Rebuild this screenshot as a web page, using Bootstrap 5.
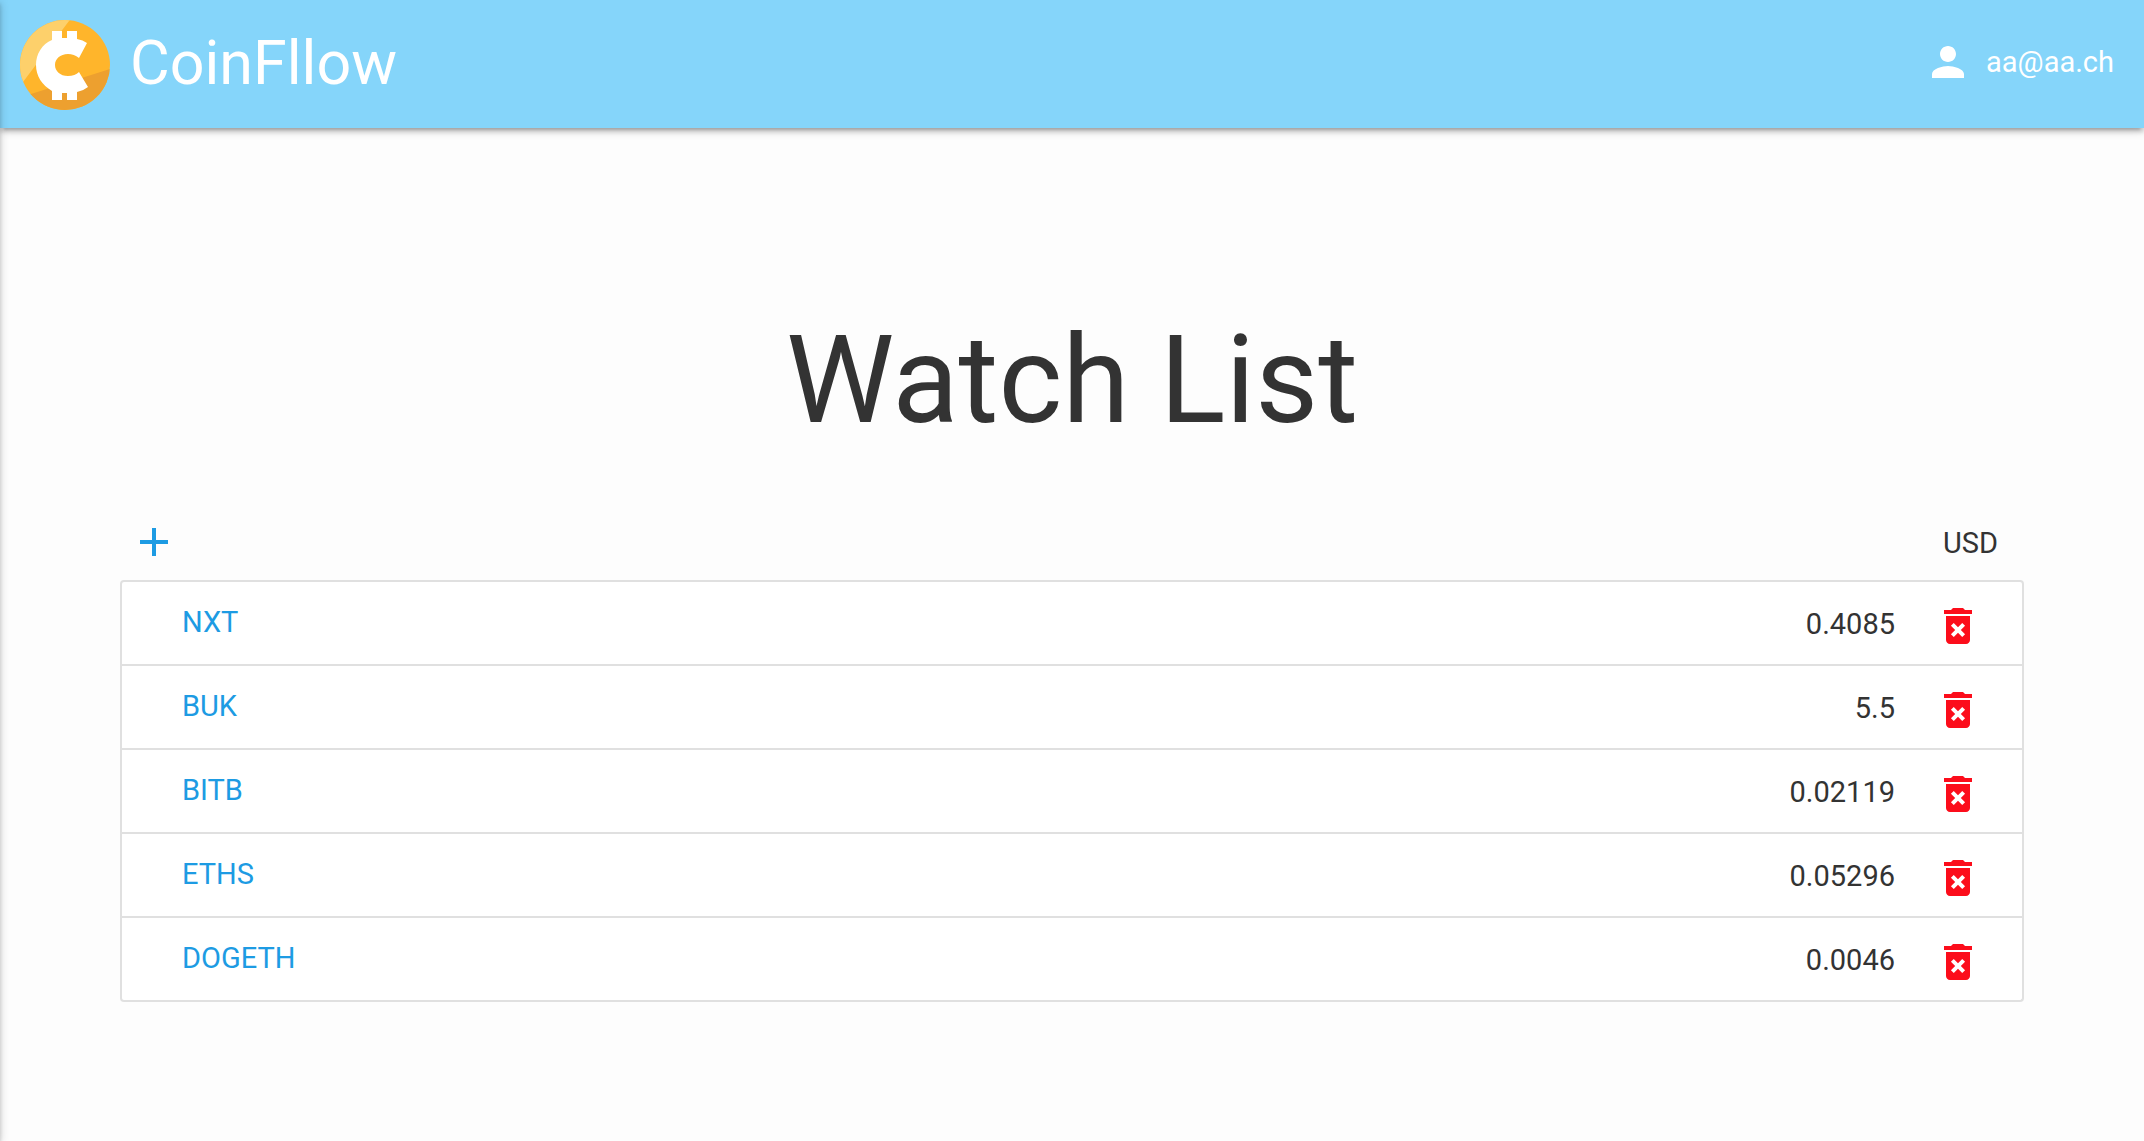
<!DOCTYPE html>
<html lang="en">
<head>
<meta charset="utf-8">
<meta name="viewport" content="width=device-width, initial-scale=1">
<title>CoinFllow</title>
<link href="https://cdn.jsdelivr.net/npm/bootstrap@5.3.0/dist/css/bootstrap.min.css" rel="stylesheet">
<style>
  body { font-family: Roboto, sans-serif; font-size: 29px; line-height: 44px; color: #333; background: #fdfdfd; }
  /* edge shadow of the closed side drawer */
  body::before { content: ""; position: fixed; z-index: 10; top: 0; bottom: 0; left: -20px; width: 20px;
    box-shadow: 0 4px 4px rgba(0,0,0,.14), 0 2px 10px rgba(0,0,0,.2); }
  .topbar { height: 128px; padding: 0 30px 4px 20px; background: #85d5fa;
    box-shadow: 0 4px 4px rgba(0,0,0,.14), 0 6px 2px -4px rgba(0,0,0,.12), 0 2px 10px rgba(0,0,0,.2); }
  .brand-link { gap: 20px; padding-top: 2px; font-size: 61px; line-height: 72px; }
  .brand-link svg { width: 90px; height: 90px; margin-top: 4px; }
  .user-link { gap: 14px; }
  .icon { width: 48px; height: 48px; display: block; fill: currentColor; }
  .watch { padding: 186px 120px 60px; }
  .title-text { font-size: 122px; line-height: 134px; margin-bottom: 70px; font-weight: 400; }
  .tools { padding: 0 26px 14px 10px; }
  .currency { padding-top: 2px; }
  .btn-icon { color: #1d9be3; }
  .btn-remove { color: #fc0d1b; padding-top: 6px; }
  .btn-remove:hover { color: #c90a15; }
  .coins { --bs-list-group-border-width: 2px; --bs-list-group-border-color: #e0e0e0; --bs-list-group-border-radius: 4px; --bs-list-group-bg: #fff; --bs-list-group-color: #333; }
  .coin { height: 84px; padding: 0 40px 0 60px; }
  .coin:first-child { height: 86px; }
  .coin-name { color: #1d9be3; padding-bottom: 2px; }
  .price { padding-right: 39px; padding-top: 2px; }
</style>
</head>
<body>
<header>
  <nav class="topbar d-flex align-items-center justify-content-between" aria-label="Main">
    <a href="#" class="brand-link d-flex align-items-center text-white text-decoration-none">
      <svg viewBox="0 0 90 90" aria-hidden="true">
        <defs><clipPath id="coin"><circle cx="45" cy="45" r="45"/></clipPath></defs>
        <g clip-path="url(#coin)">
          <rect width="90" height="90" fill="#ffb52b"/>
          <path d="M0 0H50L49 1L3 62H0Z" fill="#fdd06b"/>
          <path d="M90 49L11 74L0 77V90H90Z" fill="#eda02f"/>
        </g>
        <path fill="#fff" d="M32 11h10v7h5v-7h10v8q6 1 10 4l-8 15q-5-4-11-4c-8 0-13 5-13 11s5 11 13 11q7 0 11-4l9 15q-5 4-11 5v8H47v-7h-5v7H32v-9C22 65 16 56 16 45S22 24 32 20Z"/>
      </svg>
      <span>CoinFllow</span>
    </a>
    <a href="#" class="user-link d-flex align-items-center text-white text-decoration-none">
      <svg class="icon" viewBox="0 0 24 24" aria-hidden="true"><path d="M12 12c2.21 0 4-1.79 4-4s-1.79-4-4-4-4 1.790-4 4 1.790 4 4 4zm0 2c-2.670 0-8 1.340-8 4v2h16v-2c0-2.660-5.330-4-8-4z"/></svg>
      <span>aa@aa.ch</span>
    </a>
  </nav>
</header>

<svg class="d-none" aria-hidden="true">
  <symbol id="trash" viewBox="0 0 24 24"><path fill-rule="evenodd" d="M6 19c0 1.100.900 2 2 2h8c1.100 0 2-.900 2-2V7H6v12zm2.460-7.120 1.410-1.410L12 12.590l2.120-2.120 1.410 1.410L13.410 14l2.120 2.120-1.410 1.410L12 15.410l-2.120 2.120-1.410-1.410L10.590 14l-2.130-2.120zM15.500 4l-1-1h-5l-1 1H5v2h14V4z"/></symbol>
</svg>

<main class="watch">
  <h1 class="title-text text-center">Watch List</h1>
  <div class="tools d-flex align-items-center justify-content-between">
    <button type="button" class="btn btn-icon p-0 border-0" aria-label="Add coin">
      <svg class="icon" viewBox="0 0 24 24"><path d="M19 13h-6v6h-2v-6H5v-2h6V5h2v6h6v2z"/></svg>
    </button>
    <span class="currency">USD</span>
  </div>
  <ul class="list-group coins">
    <li class="list-group-item coin d-flex align-items-center">
      <a href="#" class="coin-name text-decoration-none me-auto">NXT</a><span class="price">0.4085</span>
      <button type="button" class="btn btn-remove border-0 px-0 pb-0" aria-label="Remove NXT"><svg class="icon"><use href="#trash"/></svg></button>
    </li>
    <li class="list-group-item coin d-flex align-items-center">
      <a href="#" class="coin-name text-decoration-none me-auto">BUK</a><span class="price">5.5</span>
      <button type="button" class="btn btn-remove border-0 px-0 pb-0" aria-label="Remove BUK"><svg class="icon"><use href="#trash"/></svg></button>
    </li>
    <li class="list-group-item coin d-flex align-items-center">
      <a href="#" class="coin-name text-decoration-none me-auto">BITB</a><span class="price">0.02119</span>
      <button type="button" class="btn btn-remove border-0 px-0 pb-0" aria-label="Remove BITB"><svg class="icon"><use href="#trash"/></svg></button>
    </li>
    <li class="list-group-item coin d-flex align-items-center">
      <a href="#" class="coin-name text-decoration-none me-auto">ETHS</a><span class="price">0.05296</span>
      <button type="button" class="btn btn-remove border-0 px-0 pb-0" aria-label="Remove ETHS"><svg class="icon"><use href="#trash"/></svg></button>
    </li>
    <li class="list-group-item coin d-flex align-items-center">
      <a href="#" class="coin-name text-decoration-none me-auto">DOGETH</a><span class="price">0.0046</span>
      <button type="button" class="btn btn-remove border-0 px-0 pb-0" aria-label="Remove DOGETH"><svg class="icon"><use href="#trash"/></svg></button>
    </li>
  </ul>
</main>
<script src="https://cdn.jsdelivr.net/npm/bootstrap@5.3.0/dist/js/bootstrap.bundle.min.js"></script>
</body>
</html>
